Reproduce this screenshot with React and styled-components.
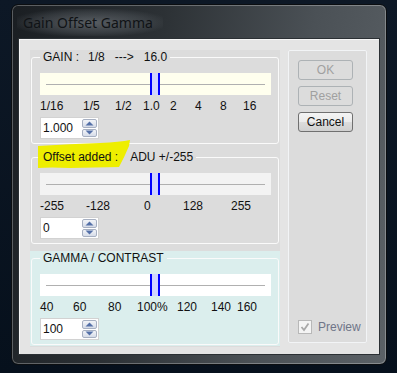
import React from "react";
import styled, { createGlobalStyle } from "styled-components";

const GlobalStyle = createGlobalStyle`
  html, body {
    margin: 0;
    padding: 0;
    background: #07111e;
    width: 397px;
    height: 373px;
    overflow: hidden;
  }
  * { box-sizing: border-box; }
`;

const UI_FONT = `"Liberation Sans", Arial, sans-serif`;

const Desktop = styled.div`
  width: 397px;
  height: 373px;
  padding: 4px 0 0 11px;
  background: linear-gradient(180deg, #0d1826 0%, #06101c 100%);
`;

const Window = styled.div`
  width: 376px;
  height: 361px;
  display: flex;
  flex-direction: column;
  border-radius: 7px;
  border: 1px solid #0b0e11;
  box-shadow: inset 0 0 0 1px rgba(255, 255, 255, 0.28);
  background: linear-gradient(100deg, #1a1e22 0%, #2c3135 35%, #4b5156 70%, #5b6166 100%);
`;

const TitleBar = styled.div`
  height: 33px;
  display: flex;
  align-items: center;
  padding: 2px 0 0 5px;
`;

const Title = styled.div`
  font-family: "Noto Sans", "Open Sans", sans-serif;
  font-size: 14px;
  color: #101316;
  padding: 4px 10px 4px 6px;
  background: radial-gradient(ellipse at center, rgba(140, 146, 152, 0.5) 0%, rgba(110, 116, 122, 0.25) 55%, rgba(0, 0, 0, 0) 78%);
`;

const Client = styled.div`
  flex: 1;
  margin: 0 6px 9px 6px;
  background: #e4e4e4;
  border: 1px solid #2b3034;
  box-shadow: inset 1px 1px 0 #f6f6f6;
  padding: 11px 0 0 11px;
  display: flex;
  align-items: flex-start;
  gap: 8px;
  font-family: ${UI_FONT};
  font-size: 12px;
  color: #111;
`;

const LeftPanel = styled.div`
  position: relative;
  width: 250px;
  height: 297px;
  background: #dcdcdc;
  display: flex;
  flex-direction: column;
`;

const GroupBox = styled.div`
  background: ${(p) => p.$bg || "transparent"};
  margin-top: ${(p) => p.$top || "0"};
  padding: 0 1px 1px 1px;
`;

const Fieldset = styled.fieldset`
  margin: 0;
  padding: 0 7px 4px 8px;
  border: 1px solid #fafafa;
  border-radius: 3px;
  min-width: 0;
`;

const Legend = styled.legend`
  position: relative;
  z-index: 1;
  padding: 0 3px;
  margin-left: 0;
  height: 14px;
  line-height: 14px;
  white-space: nowrap;
`;

const LegendPart = styled.span`
  margin-left: ${(p) => p.$gap || "0"};
`;

const Slider = styled.div`
  position: relative;
  margin-top: 9px;
  height: 22px;
  background: ${(p) => p.$bg};
`;

const Track = styled.div`
  position: absolute;
  left: 6px;
  right: 6px;
  top: 11px;
  height: 1px;
  background: #b0b0b0;
`;

const Thumb = styled.div`
  position: absolute;
  top: 0;
  bottom: 0;
  width: 10px;
  background: #d0d4ff;
  border-left: 2px solid #0000ff;
  border-right: 2px solid #0000ff;
`;

const Scale = styled.div`
  position: relative;
  height: 22px;
`;

const Tick = styled.span`
  position: absolute;
  top: 0;
  line-height: 22px;
  white-space: nowrap;
`;

const Spin = styled.div`
  width: 59px;
  height: 22px;
  display: flex;
  align-items: stretch;
  background: #fff;
  border: 1px solid #d2d2d2;
  padding: 1px 1px 1px 0;
`;

const SpinValue = styled.div`
  flex: 1;
  padding-left: 2px;
  line-height: 18px;
`;

const SpinButtons = styled.div`
  width: 15px;
  display: flex;
  flex-direction: column;
  gap: 1px;
`;

const SpinButton = styled.div`
  flex: 1;
  display: flex;
  align-items: center;
  justify-content: center;
  border: 1px solid #a7b0c2;
  border-radius: 2px;
  background: linear-gradient(180deg, #f2f4f8 0%, #d6dce8 100%);
`;

const RightPanel = styled.div`
  width: 79px;
  height: 293px;
  border: 1px solid #f2f4f6;
  border-radius: 2px;
  background: #dcdcdc;
  padding: 9px 0 8px 9px;
  display: flex;
  flex-direction: column;
  gap: 6px;
`;

const Button = styled.div`
  width: 55px;
  height: 20px;
  display: flex;
  align-items: center;
  justify-content: center;
  border-radius: 3px;
  border: 1px solid ${(p) => (p.$disabled ? "#adb2b5" : "#707070")};
  color: ${(p) => (p.$disabled ? "#a0a0a0" : "#111")};
  background: ${(p) =>
    p.$disabled ? "#dcdcdc" : "linear-gradient(180deg, #f4f4f4 0%, #ebebeb 50%, #dcdcdc 51%, #d0d0d0 100%)"};
`;

const CheckRow = styled.div`
  margin-top: auto;
  display: flex;
  align-items: center;
  gap: 6px;
  color: #6f7588;
`;

const CheckBox = styled.div`
  width: 14px;
  height: 14px;
  border: 1px solid #b8b8b8;
  background: #f4f4f4;
  display: flex;
  align-items: center;
  justify-content: center;
`;

const Highlight = styled.svg`
  position: absolute;
  left: 0;
  top: 0;
  width: 250px;
  height: 297px;
  z-index: 0;
  pointer-events: none;
`;

const Arrow = ({ up }) => (
  <svg width="9" height="5" viewBox="0 0 9 5">
    <path d={up ? "M0.5 4.5 L4.5 0.5 L8.5 4.5 Z" : "M0.5 0.5 L4.5 4.5 L8.5 0.5 Z"} fill="#5470a8" />
  </svg>
);

const SpinBox = ({ value }) => (
  <Spin>
    <SpinValue>{value}</SpinValue>
    <SpinButtons>
      <SpinButton><Arrow up /></SpinButton>
      <SpinButton><Arrow /></SpinButton>
    </SpinButtons>
  </Spin>
);

const SliderGroup = ({ bg, ticks, thumb }) => (
  <>
    <Slider $bg={bg}>
      <Track />
      <Thumb style={{ left: thumb }} />
    </Slider>
    <Scale>
      {ticks.map(([label, x]) => (
        <Tick key={label} style={{ left: x }}>
          {label}
        </Tick>
      ))}
    </Scale>
  </>
);

const gainTicks = [["1/16", 0], ["1/5", 43], ["1/2", 75], ["1.0", 103], ["2", 130], ["4", 155], ["8", 180], ["16", 203]];
const offsetTicks = [["-255", 0], ["-128", 46], ["0", 104], ["128", 143], ["255", 191]];
const gammaTicks = [["40", 0], ["60", 33], ["80", 68], ["100%", 97], ["120", 137], ["140", 171], ["160", 197]];

export default function App() {
  return (
    <>
      <GlobalStyle />
      <Desktop>
        <Window>
          <TitleBar>
            <Title>Gain Offset Gamma</Title>
          </TitleBar>
          <Client>
            <LeftPanel>
              <Highlight viewBox="0 0 250 297">
                <path
                  d="M8 96 Q40 94 70 93 Q90 92 100 90 L99 96 Q94 108 89 117 L40 118 Q20 117 8 118 Z"
                  fill="#eeee00"
                />
              </Highlight>
              <GroupBox>
                <Fieldset>
                  <Legend>
                    GAIN :<LegendPart $gap="9px">1/8</LegendPart>
                    <LegendPart $gap="10px">---&gt;</LegendPart>
                    <LegendPart $gap="10px">16.0</LegendPart>
                  </Legend>
                  <SliderGroup bg="#ffffee" ticks={gainTicks} thumb={110} />
                  <SpinBox value="1.000" />
                </Fieldset>
              </GroupBox>
              <GroupBox $top="5px">
                <Fieldset>
                  <Legend>
                    Offset added :<LegendPart $gap="12px">ADU +/-255</LegendPart>
                  </Legend>
                  <SliderGroup bg="#f3f3f3" ticks={offsetTicks} thumb={110} />
                  <SpinBox value="0" />
                </Fieldset>
              </GroupBox>
              <GroupBox $top="6px" $bg="#dbeeed">
                <Fieldset>
                  <Legend>GAMMA / CONTRAST</Legend>
                  <SliderGroup bg="#ffffff" ticks={gammaTicks} thumb={110} />
                  <SpinBox value="100" />
                </Fieldset>
              </GroupBox>
            </LeftPanel>
            <RightPanel>
              <Button $disabled>OK</Button>
              <Button $disabled>Reset</Button>
              <Button>Cancel</Button>
              <CheckRow>
                <CheckBox>
                  <svg width="10" height="10" viewBox="0 0 10 10">
                    <path d="M1.5 5 L4 8 L8.5 1.5" fill="none" stroke="#a8a8a8" strokeWidth="1.8" />
                  </svg>
                </CheckBox>
                Preview
              </CheckRow>
            </RightPanel>
          </Client>
        </Window>
      </Desktop>
    </>
  );
}
